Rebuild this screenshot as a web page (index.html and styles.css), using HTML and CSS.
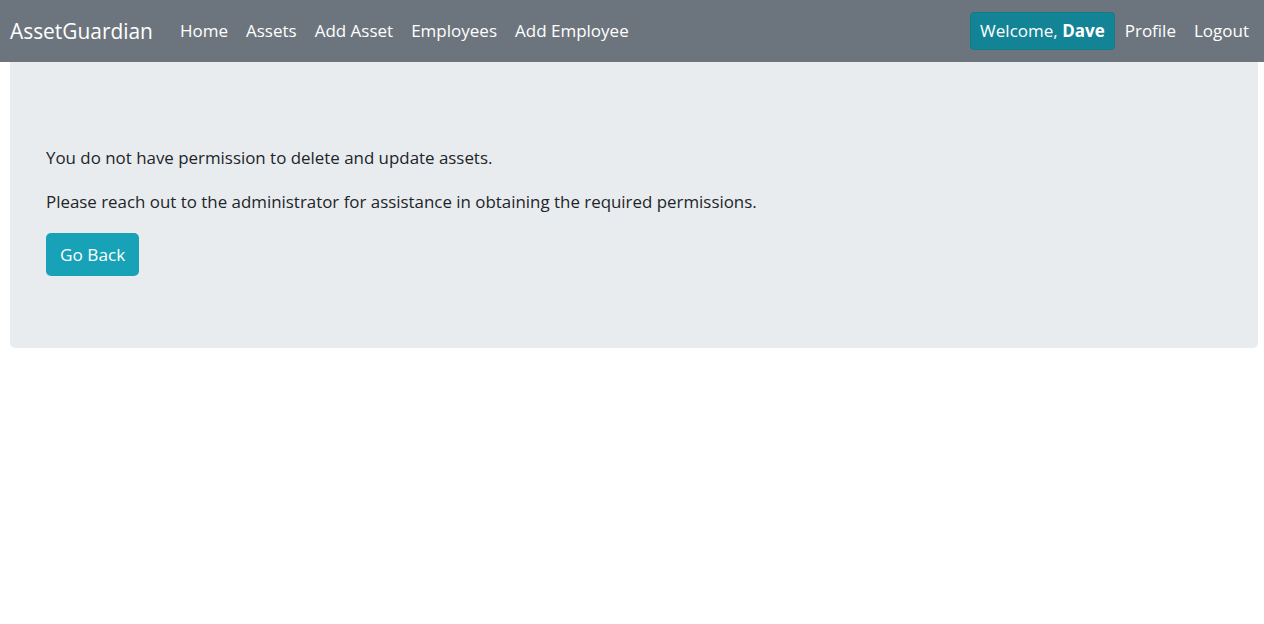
FILE: index.html
```html
<!DOCTYPE html>
<html lang="en">
<head>
<meta charset="utf-8">
<title>AssetGuardian</title>
<link rel="stylesheet" href="styles.css">
</head>
<body>
<nav class="navbar">
  <a class="brand" href="#">AssetGuardian</a>
  <ul class="nav">
    <li><a href="#">Home</a></li>
    <li><a href="#">Assets</a></li>
    <li><a href="#">Add Asset</a></li>
    <li><a href="#">Employees</a></li>
    <li><a href="#">Add Employee</a></li>
  </ul>
  <ul class="nav nav-right">
    <li><span class="welcome">Welcome, <b>Dave</b></span></li>
    <li><a href="#">Profile</a></li>
    <li><a href="#">Logout</a></li>
  </ul>
</nav>
<main class="jumbotron">
  <p>You do not have permission to delete and update assets.</p>
  <p>Please reach out to the administrator for assistance in obtaining the required permissions.</p>
  <a class="btn" href="#">Go Back</a>
</main>
</body>
</html>
```
FILE: styles.css
```css
* { box-sizing: border-box; }
html, body { margin: 0; padding: 0; }
body {
  font-family: "Open Sans", "Noto Sans", sans-serif;
  font-size: 17px;
  color: #212529;
  background: #fff;
}
a { text-decoration: none; }
.navbar {
  display: flex;
  align-items: center;
  height: 62px;
  padding: 0 6px 0 10px;
  background: #6c757d;
}
.brand {
  color: #fff;
  font-size: 20.9px;
  margin-right: 18px;
  white-space: nowrap;
}
.nav {
  display: flex;
  align-items: center;
  list-style: none;
  margin: 0;
  padding: 0;
}
.nav a {
  display: block;
  color: #fff;
  font-size: 17px;
  padding: 7px 9px 9px;
  white-space: nowrap;
}
.nav-right { margin-left: auto; }
.welcome {
  display: block;
  color: #fff;
  font-size: 17px;
  padding: 5px 9px;
  margin-right: 1px;
  height: 38px;
  line-height: 26px;
  background: #138496;
  border: 1px solid #117a8b;
  border-radius: 4px;
  white-space: nowrap;
}
.welcome b { font-weight: 700; }
.jumbotron {
  margin: 0 6px 0 10px;
  padding: 83px 36px 72px;
  background: #e9ecef;
  border-radius: 0 0 5px 5px;
}
.jumbotron p {
  margin: 0 0 17.6px;
  font-size: 16.9px;
  line-height: 26.4px;
}
.btn {
  display: inline-block;
  color: #fff;
  background: #17a2b8;
  font-size: 17.2px;
  line-height: 27px;
  padding: 8px 14px;
  border-radius: 5px;
}
```
